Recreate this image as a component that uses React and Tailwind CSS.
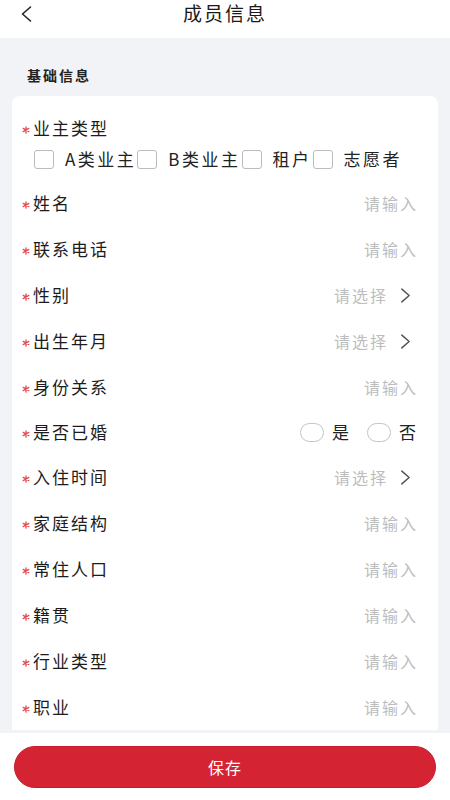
import React from "react";

const rows = [
  { label: "姓名", type: "input" },
  { label: "联系电话", type: "input" },
  { label: "性别", type: "select" },
  { label: "出生年月", type: "select" },
  { label: "身份关系", type: "input" },
  { label: "是否已婚", type: "radio" },
  { label: "入住时间", type: "select" },
  { label: "家庭结构", type: "input" },
  { label: "常住人口", type: "input" },
  { label: "籍贯", type: "input" },
  { label: "行业类型", type: "input" },
  { label: "职业", type: "input" },
];

// red required mark
const Star = () => (
  <svg className="w-[8px] h-[8px] mt-[4px] mr-[3px] shrink-0 text-[#e5484d]" viewBox="0 0 10 10" stroke="currentColor" strokeWidth="1.6" strokeLinecap="round">
    <path d="M5 1v8M1.5 3l7 4M1.5 7l7-4" />
  </svg>
);

const Chevron = ({ className }) => (
  <svg className={className} viewBox="0 0 12 18" fill="none" stroke="currentColor" strokeWidth="1.6" strokeLinecap="round" strokeLinejoin="round">
    <path d="M2 2l8 7-8 7" />
  </svg>
);

const Row = ({ label, type }) => {
  return (
    <div className={`flex items-center pl-[10px] ${type === "radio" ? "h-[44px] pr-[22px]" : type === "select" ? "h-[46px] pr-[27px]" : "h-[46px] pr-[20px]"}`}>
      <Star />
      <span className="text-[17px] tracking-[2px] text-[#1c1c1c]">{label}</span>
      <div className="ml-auto flex items-center">
        {type === "input" && (
          <span className="text-[16px] tracking-[2px] text-[#bdbdbd]">请输入</span>
        )}
        {type === "select" && (
          <>
            <span className="text-[16px] tracking-[2px] text-[#bdbdbd]">请选择</span>
            <Chevron className="w-[11px] h-[17px] ml-[12px] text-[#555]" />
          </>
        )}
        {type === "radio" && (
          <div className="flex items-center">
            <span className="w-6 h-[19px] rounded-full border border-[#c4c4c4]" />
            <span className="ml-2 text-[17px] text-[#222]">是</span>
            <span className="ml-[18px] w-6 h-[19px] rounded-full border border-[#c4c4c4]" />
            <span className="ml-2 text-[17px] text-[#222]">否</span>
          </div>
        )}
      </div>
    </div>
  );
};

const Option = ({ text }) => (
  <div className="flex items-center">
    <span className="w-[20px] h-[19px] rounded-[3px] border border-[#bcbcbc] bg-white" />
    <span className="ml-[11px] mr-[1px] text-[17px] tracking-[2.5px] text-[#222]">{text}</span>
  </div>
);

export default function App() {
  return (
    <div
      className="w-full h-[800px] flex flex-col bg-[#f2f3f7] overflow-hidden"
      style={{ fontFamily: '"Noto Sans CJK SC", "Noto Sans", sans-serif' }}
    >
      <div className="relative h-[38px] bg-white shrink-0">
        <Chevron className="absolute left-[20px] top-[5px] w-[13px] h-[18px] text-[#222] -scale-x-100" />
        <h1 className="text-center text-[19px] leading-[26px] tracking-[2px] text-[#1a1a1a]">成员信息</h1>
      </div>

      <div className="flex-1 overflow-hidden px-3">
        <div className="h-[58px] flex items-center pl-[15px] pt-[16px]">
          <span className="text-[14px] font-bold tracking-[2px] text-[#222]">基础信息</span>
        </div>
        <div className="bg-white rounded-t-lg pt-2 w-[426px]">
          <div className="pt-[12px] pb-[10px] pl-[10px]">
            <div className="flex items-center h-[24px]">
              <Star />
              <span className="text-[17px] tracking-[2px] text-[#1c1c1c]">业主类型</span>
            </div>
            <div className="flex items-center mt-[8px] h-[22px] pl-[12px]">
              <Option text="A类业主" />
              <Option text="B类业主" />
              <Option text="租户" />
              <Option text="志愿者" />
            </div>
          </div>
          {rows.map((r) => (
            <Row key={r.label} label={r.label} type={r.type} />
          ))}
        </div>
      </div>

      <div className="h-[67px] bg-white shrink-0 pt-[13px] px-[14px]">
        <button className="w-full h-[42px] rounded-full bg-[#d42433] border border-[#c81e2c] text-white text-[16px] tracking-[1px]">
          保存
        </button>
      </div>
    </div>
  );
}
